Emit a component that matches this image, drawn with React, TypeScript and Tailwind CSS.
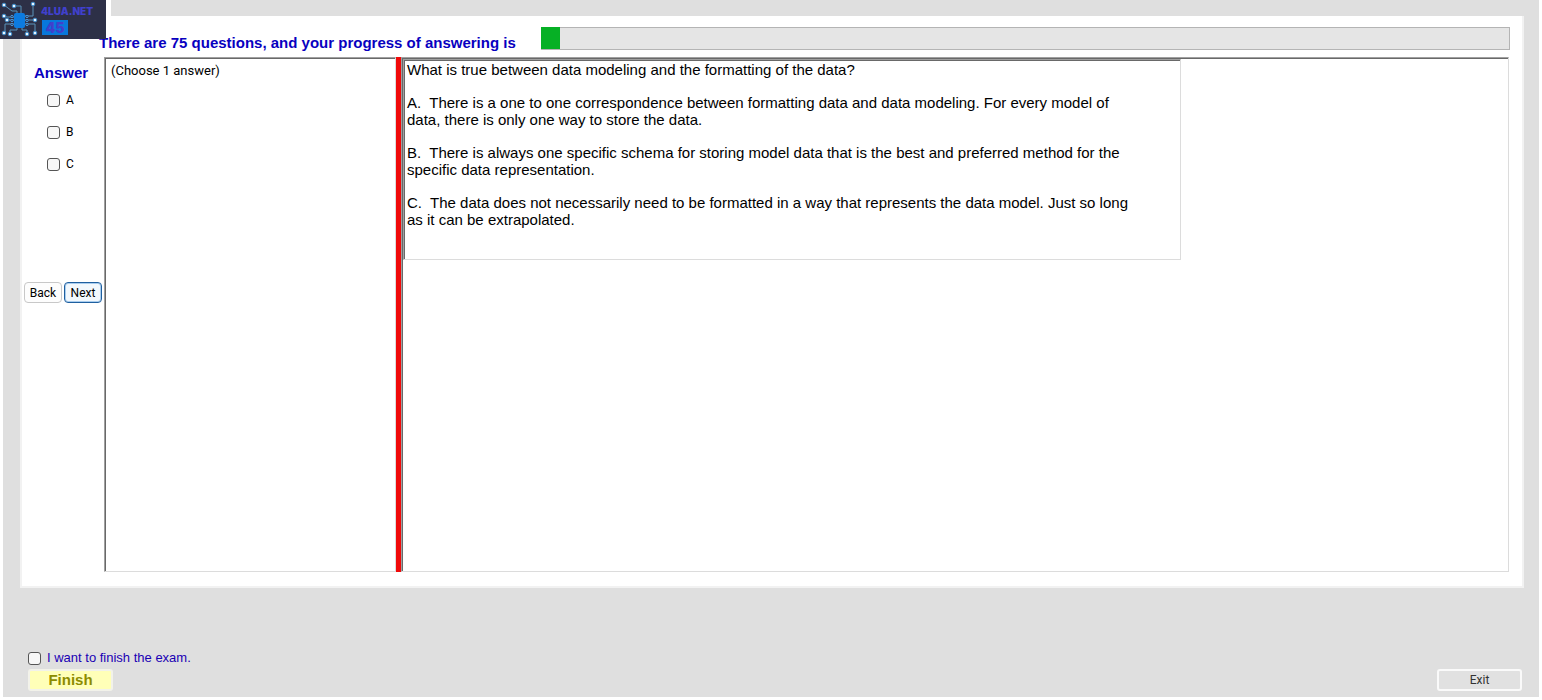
import React from "react";

const sans = "font-['Liberation_Sans',Arial,sans-serif]";
const roboto = "font-[Roboto,'Liberation_Sans',sans-serif]";

const box =
  "size-[13px] shrink-0 appearance-none rounded-[3px] border border-[#555] bg-[#f7f7f7] checked:bg-[#0067c0]";

const sunken =
  "border border-b-[#dcdcdc] border-l-[#a0a0a0] border-r-[#dcdcdc] border-t-[#a0a0a0] shadow-[inset_1px_1px_#696969]";

const paragraphs = [
  "What is true between data modeling and the formatting of the data?",
  "A.\u00a0 There is a one to one correspondence between formatting data and data modeling. For every model of data, there is only one way to store the data.",
  "B.\u00a0 There is always one specific schema for storing model data that is the best and preferred method for the specific data representation.",
  "C.\u00a0 The data does not necessarily need to be formatted in a way that represents the data model. Just so long as it can be extrapolated.",
];

const nodes = [
  [4, 5], [14, 6], [33, 4], [4, 16], [7, 20], [35, 20],
  [4, 33], [10, 34], [27, 34], [35, 33],
];

function Logo() {
  return (
    <div className="absolute left-0 top-0 flex h-[39px] w-[106px] bg-[#2d3047]">
      <svg width="40" height="39" viewBox="0 0 40 39" fill="none" aria-hidden="true" className="shrink-0">
        <g stroke="#5b93ba" strokeWidth="1">
          <path d="M4 5 L12 11 H17 V15" />
          <path d="M14 6 H21 V15" />
          <path d="M33 4 V16 H25" />
          <path d="M4 16 L7 17 H14 M7 20 H14 M25 20 H35" />
          <path d="M14 24 H5 V33" />
          <path d="M17 26 V30 H10 V34" />
          <path d="M22 26 V30 H27 V34" />
          <path d="M25 24 H35 V33" />
        </g>
        <rect x="14" y="13" width="11" height="15" rx="2" fill="#0c7be0" />
        <g stroke="#4b9be0" strokeWidth="1" fill="#2d3047">
          <circle cx="12" cy="16.5" r="1.2" />
          <circle cx="12" cy="20.5" r="1.2" />
          <circle cx="12" cy="24.5" r="1.2" />
          <circle cx="27" cy="16.5" r="1.2" />
          <circle cx="27" cy="20.5" r="1.2" />
          <circle cx="27" cy="24.5" r="1.2" />
        </g>
        {nodes.map(([x, y]) => (
          <circle key={`${x}-${y}`} cx={x} cy={y} r="1.8" fill="#e8f5ff" stroke="#3f8fcf" strokeWidth="1" />
        ))}
      </svg>
      <div className="flex flex-col items-start pl-px pt-[5px] font-[Inter,sans-serif] font-black text-[#4040cc]">
        <span className="text-[10px] leading-3">4LUA.NET</span>
        <span className="ml-px mt-[3px] flex h-[15px] w-[26px] items-center justify-center bg-[#0878dc] text-[14px] leading-none">
          45
        </span>
      </div>
    </div>
  );
}

export default function App() {
  return (
    <div className={`relative flex min-h-screen flex-col bg-white px-[3px] pb-[3px] text-black ${sans}`}>
      <main className="flex flex-1 flex-col bg-[#dfdfdf] pl-[17px] pr-[15px] pt-4">
        <section className="flex flex-1 flex-col border-x-2 border-b-2 border-[#f2f2f2] bg-white pb-[14px]">
          <header className="flex h-[41px] items-start pl-[77px] pr-3 pt-[11px]">
            <h1 className="w-[426px] shrink-0 pt-2 text-[15px] font-bold leading-4 text-[#0800c0]">
              There are 75 questions, and your progress of answering is
            </h1>
            <div
              role="progressbar"
              aria-label="Progress"
              aria-valuenow={2}
              className="ml-4 h-[23px] flex-1 border border-[#b4b4b4] bg-[#e5e5e5]"
            >
              <div className="-ml-px -mt-px h-[22px] bg-[#06b025]" style={{ width: "2%" }} />
            </div>
          </header>

          <div className="flex flex-1 pr-[13px]">
            <div className="flex w-[82px] shrink-0 flex-col pt-2">
              <h2 className="pl-3 text-[15px] font-bold leading-4 text-[#0800c0]">Answer</h2>
              <div className="flex flex-col gap-4 pl-[25px] pt-[11px]">
                {["A", "B", "C"].map((l) => (
                  <label key={l} className={`flex h-4 items-center gap-[6px] text-xs ${roboto}`}>
                    <input type="checkbox" className={box} />
                    {l}
                  </label>
                ))}
              </div>
              <div className={`mt-[110px] flex gap-[2px] pl-[2px] text-xs ${roboto}`}>
                <button className="h-[21px] w-[38px] shrink-0 rounded-[4px] border border-[#c8c8c8] bg-[#fdfdfd]">
                  Back
                </button>
                <button className="h-[21px] w-[38px] shrink-0 rounded-[4px] border border-[#1f5f9f] bg-[#f2f8fd] shadow-[inset_0_0_0_1px_#a9cdee]">
                  Next
                </button>
              </div>
            </div>

            <div className={`w-[292px] shrink-0 pl-[6px] pt-1 text-[13px] leading-[18px] ${sunken} ${roboto}`}>
              (Choose 1 answer)
            </div>
            <div className="w-[5px] shrink-0 bg-[#f00a0a]" />
            <div className={`min-w-0 flex-1 pl-px pt-px ${sunken}`}>
              <article
                className={`flex min-h-[201px] max-w-[778px] flex-col gap-4 pl-[3px] pr-10 pt-px text-[15px] leading-[17px] ${sunken}`}
              >
                {paragraphs.map((p) => (
                  <p key={p}>{p}</p>
                ))}
              </article>
            </div>
          </div>
        </section>

        <footer className="flex h-[109px] shrink-0 items-end justify-between pb-[6px] pl-2 pr-[2px]">
          <div className="flex flex-col items-start">
            <label className="mb-[3px] flex items-center gap-[6px] text-[13px] leading-4 text-[#1a00b4]">
              <input type="checkbox" className={box} />
              I want to finish the exam.
            </label>
            <button className="h-[22px] w-[85px] rounded-[3px] border-2 border-[#f2f2ea] bg-[#ffffb8] text-[15px] font-bold leading-4 text-[#8c8c00]">
              Finish
            </button>
          </div>
          <button
            className={`h-[22px] w-[85px] rounded-[3px] border-2 border-[#fafafa] bg-[#e1e1e1] text-xs text-[#333] ${roboto}`}
          >
            Exit
          </button>
        </footer>
      </main>
      <div className="absolute left-[106px] top-0 h-4 w-[5px] bg-white" />
      <Logo />
    </div>
  );
}
